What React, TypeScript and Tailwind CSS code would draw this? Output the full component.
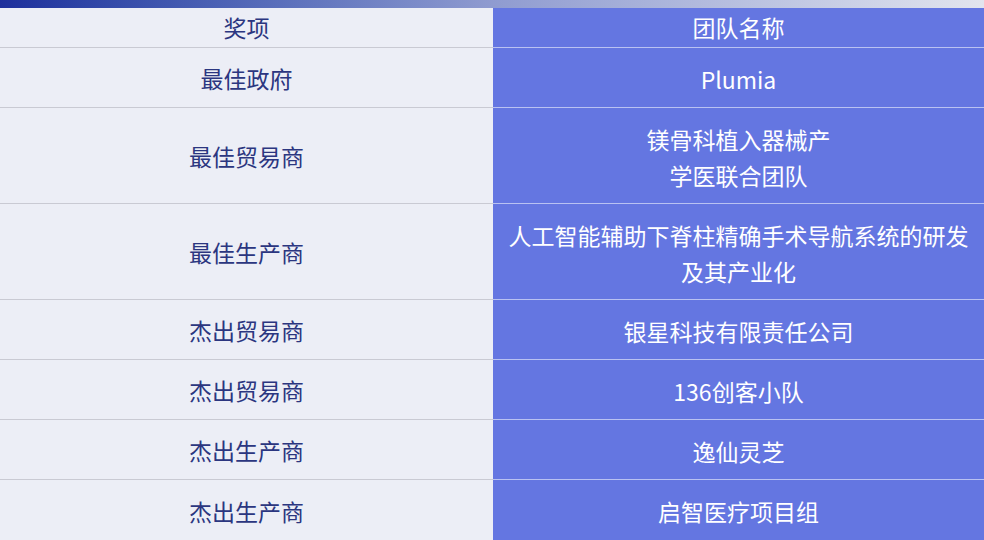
const rows: { award: string; team: string[]; tall?: boolean }[] = [
  { award: "最佳政府", team: ["Plumia"] },
  { award: "最佳贸易商", team: ["镁骨科植入器械产", "学医联合团队"], tall: true },
  { award: "最佳生产商", team: ["人工智能辅助下脊柱精确手术导航系统的研发", "及其产业化"], tall: true },
  { award: "杰出贸易商", team: ["银星科技有限责任公司"] },
  { award: "杰出贸易商", team: ["136创客小队"] },
  { award: "杰出生产商", team: ["逸仙灵芝"] },
  { award: "杰出生产商", team: ["启智医疗项目组"] },
];

export default function App() {
  return (
    <div
      className="w-[984px] h-[540px] overflow-hidden bg-[#eceef6]"
      style={{ fontFamily: '"Noto Sans CJK SC", "Noto Sans", sans-serif' }}
    >
      <div className="h-2 bg-gradient-to-r from-[#1e2f9c] via-[#8f9bd0] to-[#e2e5ee]" />
      <div className="grid grid-cols-[493px_491px]">
        <div className="h-10 flex items-center justify-center text-[23px] text-[#2b3680] border-b border-[#c9cad3]">
          奖项
        </div>
        <div className="h-10 flex items-center justify-center text-[23px] text-white bg-[#6476e1] border-b border-[#b9c2f2]">
          团队名称
        </div>
        {rows.map((r, i) => (
          <div key={i} className="contents">
            <div
              className={`${r.tall ? "h-24" : "h-[60px]"} flex items-center justify-center pt-0.5 text-[23px] text-[#2b3680] ${i < rows.length - 1 ? "border-b border-[#c9cad3]" : ""}`}
            >
              {r.award}
            </div>
            <div
              className={`${r.tall ? "h-24" : "h-[60px]"} flex flex-col items-center justify-center pt-0.5 text-[23px] leading-[36px] text-white bg-[#6476e1] ${i < rows.length - 1 ? "border-b border-[#b9c2f2]" : ""}`}
            >
              {r.team.map((t, j) => (
                <span key={j}>{t}</span>
              ))}
            </div>
          </div>
        ))}
      </div>
    </div>
  );
}
